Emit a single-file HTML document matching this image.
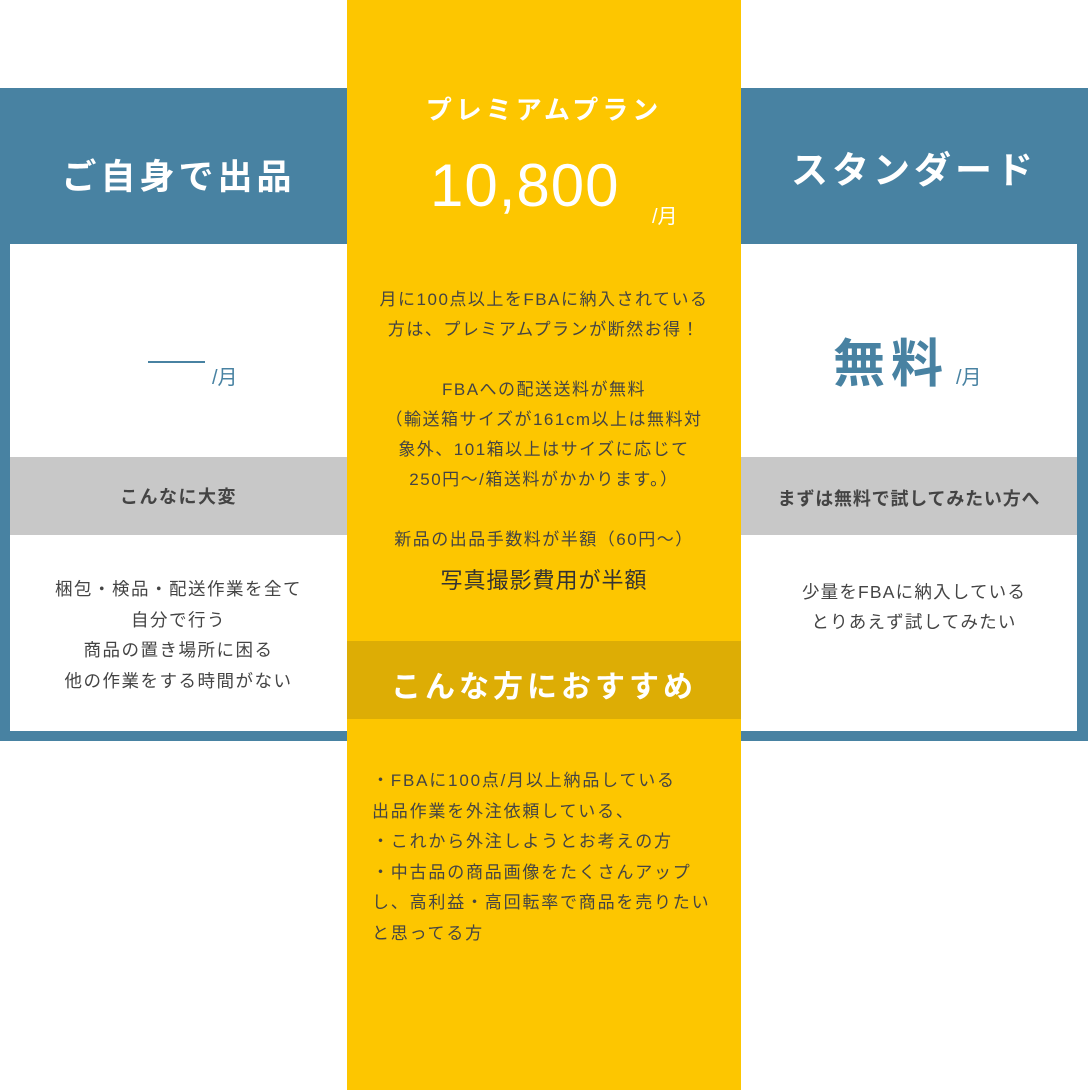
<!DOCTYPE html>
<html><head><meta charset="utf-8"><style>
*{margin:0;padding:0;box-sizing:border-box}
body{width:1088px;height:1091px;background:#fff;position:relative;overflow:hidden;font-family:"Liberation Sans","Noto Sans CJK JP",sans-serif;color:#444}
.a{position:absolute}
.c{text-align:center}
.blue{background:#4882a2}
</style></head><body>
<div class="a blue" style="left:0;top:88px;width:347px;height:653px"></div>
<div class="a" style="left:10px;top:244px;width:337px;height:487px;background:#fff"></div>
<div class="a" style="left:10px;top:457px;width:337px;height:78px;background:#c8c8c8"></div>
<div class="a blue" style="left:741px;top:88px;width:347px;height:653px"></div>
<div class="a" style="left:741px;top:244px;width:336px;height:487px;background:#fff"></div>
<div class="a" style="left:741px;top:457px;width:336px;height:78px;background:#c8c8c8"></div>
<div class="a" style="left:347px;top:0;width:394px;height:1090px;background:#fdc600"></div>
<div class="a" style="left:347px;top:641px;width:394px;height:78px;background:#ddad05"></div>

<div class="a c" style="left:10px;top:149px;width:337px;font-size:35px;font-weight:bold;color:#fff;letter-spacing:4px">ご自身で出品</div>
<div class="a" style="left:148px;top:361px;width:57px;height:2px;background:#4882a2"></div>
<div class="a" style="left:212px;top:361px;font-size:20px;color:#4882a2">/月</div>
<div class="a c" style="left:10px;top:483px;width:337px;font-size:18px;font-weight:bold;color:#444;letter-spacing:1.5px">こんなに大変</div>
<div class="a c" style="left:10px;top:574px;width:337px;font-size:17.5px;line-height:30.5px;color:#444;letter-spacing:1.5px">梱包・検品・配送作業を全て<br>自分で行う<br>商品の置き場所に困る<br>他の作業をする時間がない</div>

<div class="a c" style="left:741px;top:140px;width:346px;font-size:37px;font-weight:bold;color:#fff;letter-spacing:4px">スタンダード</div>
<div class="a" style="left:833px;top:322px;font-size:52px;font-weight:bold;color:#4882a2;letter-spacing:6px">無料</div>
<div class="a" style="left:956px;top:361px;font-size:20px;color:#4882a2">/月</div>
<div class="a c" style="left:741px;top:485px;width:336px;font-size:18px;font-weight:bold;color:#444;letter-spacing:0.8px">まずは無料で試してみたい方へ</div>
<div class="a c" style="left:741px;top:577px;width:346px;font-size:17.5px;line-height:30px;color:#444;letter-spacing:1.2px">少量をFBAに納入している<br>とりあえず試してみたい</div>

<div class="a c" style="left:347px;top:90px;width:394px;font-size:26px;font-weight:bold;color:#fff;letter-spacing:4px">プレミアムプラン</div>
<div class="a" style="left:430px;top:151px;font-size:60px;color:#fff;letter-spacing:1px">10,800</div>
<div class="a" style="left:652px;top:200px;font-size:20px;color:#fff">/月</div>
<div class="a c" style="left:347px;top:285px;width:394px;font-size:17px;line-height:30px;color:#444;letter-spacing:1.5px">月に100点以上をFBAに納入されている<br>方は、プレミアムプランが断然お得！<br><br>FBAへの配送送料が無料<br>（輸送箱サイズが161cm以上は無料対<br>象外、101箱以上はサイズに応じて<br>250円〜/箱送料がかかります。）<br><br>新品の出品手数料が半額（60円〜）</div>
<div class="a c" style="left:347px;top:563px;width:394px;font-size:22px;color:#333;letter-spacing:1px">写真撮影費用が半額</div>
<div class="a c" style="left:347px;top:662px;width:394px;font-size:30px;font-weight:bold;color:#fff;letter-spacing:4px">こんな方におすすめ</div>
<div class="a" style="left:372px;top:766px;width:370px;font-size:17px;line-height:30.5px;color:#444;letter-spacing:1.8px">・FBAに100点/月以上納品している<br>出品作業を外注依頼している、<br>・これから外注しようとお考えの方<br>・中古品の商品画像をたくさんアップ<br>し、高利益・高回転率で商品を売りたい<br>と思ってる方</div>
</body></html>
